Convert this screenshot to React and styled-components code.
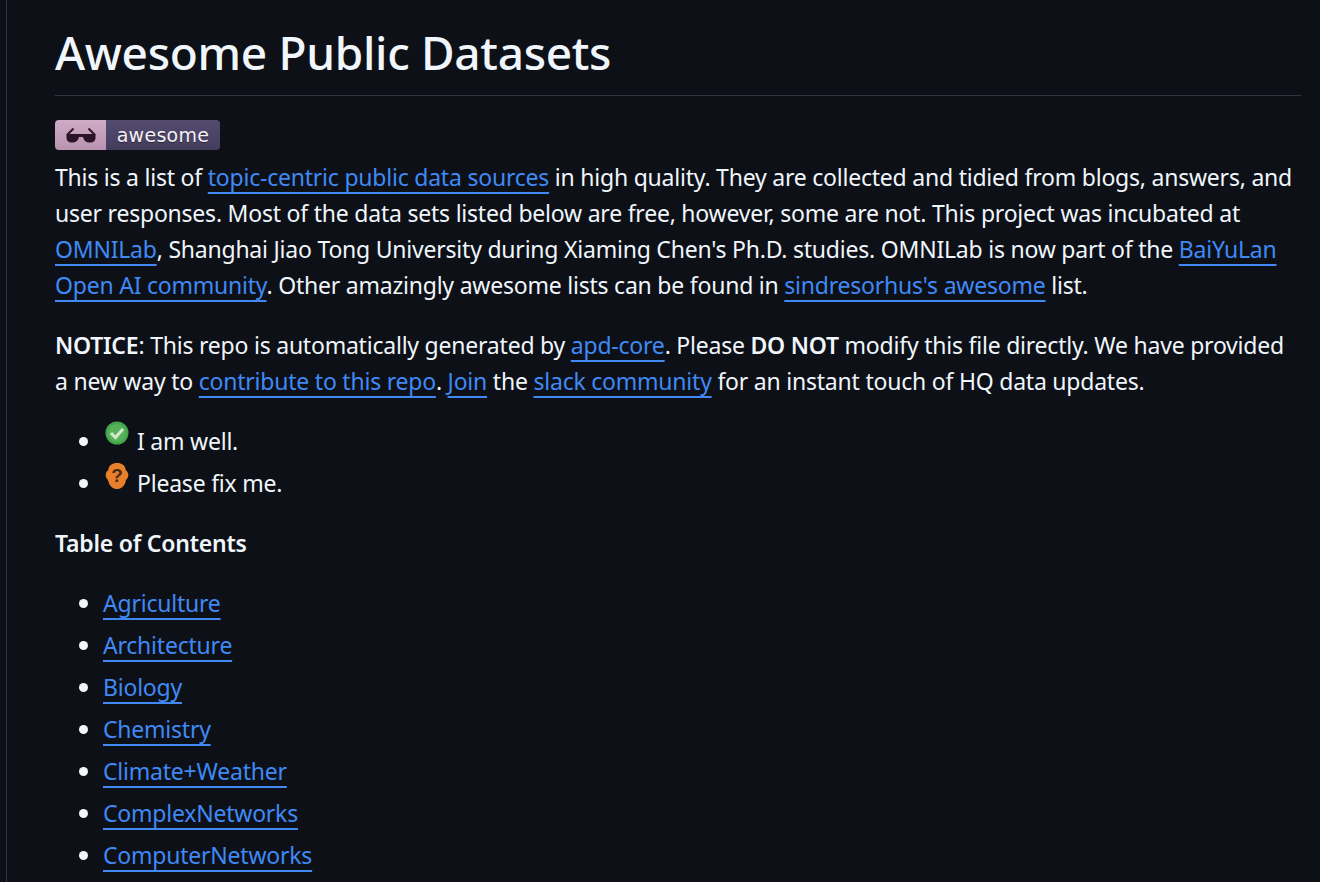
import React from 'react'
import styled, { createGlobalStyle } from 'styled-components'

const GlobalStyle = createGlobalStyle`
    html, body {
        margin: 0;
        height: 100%;
        overflow: hidden;
        background: #0d1117;
    }
`

const Page = styled.div`
    height: 882px;
    overflow: hidden;
    box-sizing: border-box;
    margin-left: 6px;
    border-left: 1px solid #30363d;
    padding: 24px 19px 0 48px;
    font-family: "Noto Sans", "Open Sans", sans-serif;
    font-size: 23px;
    line-height: 36px;
    letter-spacing: -0.22px;
    color: #f0f6fc;

    & strong {
        font-weight: 600;
    }
`

const Title = styled.h1`
    margin: 0 0 24px;
    padding-bottom: 14px;
    font-size: 46px;
    line-height: 57px;
    font-weight: 500;
    letter-spacing: -0.32px;
    border-bottom: 1px solid #30363d;
`

const Paragraph = styled.p`
    margin: 0 0 24px;
    white-space: nowrap;
`

const Link = styled.a`
    color: #4089f5;
    text-decoration: underline;
    text-decoration-thickness: 2px;
    text-underline-offset: 6px;
    text-decoration-skip-ink: none;
`

const BadgeWrap = styled.span`
    display: flex;
    width: 165px;
    height: 30px;
    border-radius: 4px;
    overflow: hidden;
    margin-bottom: 9px;
`

const BadgeIcon = styled.span`
    display: flex;
    align-items: center;
    justify-content: center;
    width: 51px;
    background: linear-gradient(#cfabc6, #b993b0);
`

const BadgeLabel = styled.span`
    flex: 1;
    display: flex;
    align-items: center;
    justify-content: center;
    background: linear-gradient(#544c70, #443d5c);
    font-family: "DejaVu Sans", sans-serif;
    font-size: 19px;
    line-height: 27px;
    letter-spacing: 0.3px;
    color: #f4f2f6;
    text-shadow: 0 1px 0 #2a2438;
`

const List = styled.ul`
    margin: 0 0 24px;
    padding: 0 0 0 48px;
`

const Item = styled.li`
    margin-bottom: 6px;
    &::marker {
        font-size: 24px;
    }
`

const StatusIcon = styled.svg`
    width: 24px;
    height: 28px;
    margin: 0 8px 0 2px;
    vertical-align: -3px;
    position: relative;
    top: -5px;
`

const Sunglasses = () => (
    <svg width="30" height="16" viewBox="0 0 30 16">
        <path d="M1 8 L7.5 1.5" stroke="#2a1426" strokeWidth="2" fill="none" />
        <path d="M29 8 L22.5 1.5" stroke="#2a1426" strokeWidth="2" fill="none" />
        <path d="M0.5 7 H29.5 V10.5 C29.5 14 27.5 15.5 24 15.5 C20 15.5 18 14 17 10 H13 C12 14 10 15.5 6 15.5 C2.5 15.5 0.5 14 0.5 10.5 Z" fill="#2a1426" />
    </svg>
)

const CheckIcon = () => (
    <StatusIcon viewBox="0 0 24 28">
        <circle cx="12" cy="13" r="11.5" fill="#46a64c" />
        <circle cx="12" cy="13" r="9" fill="#57b25c" />
        <path d="M6 13 L10.5 17.5 L18 9" stroke="#d6ebcb" strokeWidth="3" fill="none" />
    </StatusIcon>
)

const FixIcon = () => (
    <StatusIcon viewBox="0 0 24 28">
        <path d="M12 1 C17 1 20 3.5 20.5 7 C20.7 8.5 21.5 8.5 22.5 10 C24 12.5 23.5 15.5 21.5 17.5 C20.8 18.3 20.8 19 20.3 20.5 C19 24.5 16 27 12 27 C8 27 5 24.5 3.7 20.5 C3.2 19 3.2 18.3 2.5 17.5 C0.5 15.5 0 12.5 1.5 10 C2.5 8.5 3.3 8.5 3.5 7 C4 3.5 7 1 12 1 Z" fill="#e87f2b" />
        <text x="12" y="20" textAnchor="middle" fontFamily="Liberation Sans, sans-serif" fontSize="19" fontWeight="700" fill="#4a2a12">?</text>
    </StatusIcon>
)

const topics = [
    'Agriculture',
    'Architecture',
    'Biology',
    'Chemistry',
    'Climate+Weather',
    'ComplexNetworks',
    'ComputerNetworks',
]

export default function App() {
    return (
        <Page>
            <GlobalStyle />
            <Title>Awesome Public Datasets</Title>
            <BadgeWrap>
                <BadgeIcon><Sunglasses /></BadgeIcon>
                <BadgeLabel>awesome</BadgeLabel>
            </BadgeWrap>
            <Paragraph>
                This is a list of <Link>topic-centric public data sources</Link> in high quality. They are collected and tidied from blogs, answers, and<br />
                user responses. Most of the data sets listed below are free, however, some are not. This project was incubated at<br />
                <Link>OMNILab</Link>, Shanghai Jiao Tong University during Xiaming Chen's Ph.D. studies. OMNILab is now part of the <Link>BaiYuLan</Link><br />
                <Link>Open AI community</Link>. Other amazingly awesome lists can be found in <Link>sindresorhus's awesome</Link> list.
            </Paragraph>
            <Paragraph>
                <strong>NOTICE</strong>: This repo is automatically generated by <Link>apd-core</Link>. Please <strong>DO NOT</strong> modify this file directly. We have provided<br />
                a new way to <Link>contribute to this repo</Link>. <Link>Join</Link> the <Link>slack community</Link> for an instant touch of HQ data updates.
            </Paragraph>
            <List>
                <Item><CheckIcon />I am well.</Item>
                <Item><FixIcon />Please fix me.</Item>
            </List>
            <Paragraph><strong>Table of Contents</strong></Paragraph>
            <List>
                {topics.map(topic => (
                    <Item key={topic}><Link>{topic}</Link></Item>
                ))}
            </List>
        </Page>
    )
}
